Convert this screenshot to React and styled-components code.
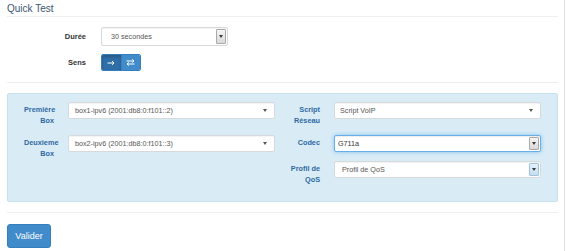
import React from 'react';
import styled, { createGlobalStyle, css } from 'styled-components';

const GlobalStyle = createGlobalStyle`
    html, body {
        margin: 0;
        padding: 0;
        background: #fff;
    }
    body {
        font-family: "Liberation Sans", Arial, sans-serif;
    }
`;

const Page = styled.div`
    width: 565px;
    height: 251px;
    box-sizing: border-box;
    border-right: 1px solid #dedede;
    padding: 0 7px;
    overflow: hidden;
`;

const Content = styled.div`
    width: 551px;
`;

const Title = styled.h3`
    margin: 0;
    padding: 3px 0 1px;
    font-size: 10px;
    line-height: 12px;
    font-weight: 500;
    color: #3b5470;
    border-bottom: 1px solid #eeeeee;
`;

const TopForm = styled.div`
    display: flex;
    flex-direction: column;
    gap: 8px;
    margin-top: 10px;
`;

const TopRow = styled.div`
    display: grid;
    grid-template-columns: 79px auto;
    column-gap: 15px;
    align-items: center;
    justify-content: start;
`;

const TopLabel = styled.label`
    text-align: right;
    font-size: 7.5px;
    font-weight: bold;
    color: #333;
`;

const Rule = styled.hr`
    margin: ${p => p.$top}px 0 ${p => p.$bottom}px;
    border: 0;
    border-top: 1px solid #eeeeee;
    height: 0;
`;

const Select = styled.div`
    display: flex;
    align-items: center;
    box-sizing: border-box;
    width: ${p => (p.$width ? `${p.$width}px` : '100%')};
    height: ${p => p.$height || 17}px;
    padding-left: ${p => p.$inset || 6}px;
    background: #fff;
    border: 1px solid ${p => (p.$focused ? '#66afe9' : '#d6dadd')};
    border-radius: 2px;
    box-shadow: ${p =>
        p.$focused
            ? 'inset 0 1px 1px rgba(0,0,0,.075), 0 0 4px rgba(102,175,233,.7)'
            : 'inset 0 1px 1px rgba(0,0,0,.05)'};
    font-size: 7.2px;
    color: ${p => (p.$dark ? '#333' : '#555')};
`;

const SelectText = styled.span`
    flex: 1;
    white-space: nowrap;
    overflow: hidden;
`;

const Caret = styled.span`
    width: 0;
    height: 0;
    margin-right: 7px;
    border-left: 2.5px solid transparent;
    border-right: 2.5px solid transparent;
    border-top: 3px solid #555;
`;

const NativeArrow = styled.span`
    align-self: stretch;
    display: flex;
    align-items: center;
    justify-content: center;
    width: 8px;
    margin: 1px 1px 1px 0;
    border: 1px solid #a9a9a9;
    border-radius: 1px;
    ${p =>
        p.$tone === 'blue'
            ? css`
                  background: linear-gradient(#e3f0fa, #c6def2);
                  border-color: #9fc2de;
              `
            : css`
                  background: linear-gradient(#f5f5f5, #d9d9d9);
              `}

    &::after {
        content: '';
        border-left: 2px solid transparent;
        border-right: 2px solid transparent;
        border-top: 3px solid #3a3a3a;
    }
`;

const Toggle = styled.div`
    display: flex;
    width: 40px;
    height: 17px;
    border-radius: 2px;
    overflow: hidden;
    border: 1px solid #357ebd;
    box-sizing: border-box;
`;

const ToggleButton = styled.button`
    flex: 1;
    display: flex;
    align-items: center;
    justify-content: center;
    padding: 0;
    border: 0;
    background: ${p => (p.$active ? '#2f6ea6' : '#428bca')};
    box-shadow: ${p => (p.$active ? 'inset 0 2px 3px rgba(0,0,0,.2)' : 'none')};
    & + & {
        border-left: 1px solid #3a7fbf;
    }
`;

const InfoPanel = styled.div`
    display: grid;
    grid-template-columns: 1fr 1fr;
    column-gap: 15px;
    box-sizing: border-box;
    padding: 8px 16px 16px;
    background: #d9ecf6;
    border: 1px solid #c7e2ef;
    border-radius: 2px;
`;

const Column = styled.div`
    display: flex;
    flex-direction: column;
    gap: 9px;
`;

const FieldRow = styled.div`
    display: grid;
    grid-template-columns: 30px 1fr;
    column-gap: 14px;
    align-items: start;
`;

const FieldLabel = styled.label`
    padding-top: 3px;
    text-align: right;
    font-size: 7.3px;
    line-height: 10.5px;
    font-weight: bold;
    color: #2f6aa3;
`;

const SubmitButton = styled.button`
    margin-top: 11px;
    width: 44px;
    height: 24px;
    padding: 0;
    font-family: inherit;
    font-size: 9px;
    color: #fff;
    background: #428bca;
    border: 1px solid #357ebd;
    border-radius: 3px;
`;

const ArrowRight = () => (
    <svg width="8" height="6" viewBox="0 0 8 6">
        <path d="M0.5 3H7M5 1.2L7 3L5 4.8" fill="none" stroke="#fff" strokeWidth="1" />
    </svg>
);

const ArrowBoth = () => (
    <svg width="9" height="7" viewBox="0 0 9 7">
        <path d="M0.5 2H8M6.2 0.4L8 2L6.2 3.6" fill="none" stroke="#fff" strokeWidth="1" />
        <path d="M8.5 5H1M2.8 3.4L1 5L2.8 6.6" fill="none" stroke="#fff" strokeWidth="1" />
    </svg>
);

const Field = ({ label, children }) => (
    <FieldRow>
        <FieldLabel>{label}</FieldLabel>
        {children}
    </FieldRow>
);

export default function App() {
    return (
        <Page>
            <GlobalStyle />
            <Content>
                <Title>Quick Test</Title>

                <TopForm>
                    <TopRow>
                        <TopLabel>Durée</TopLabel>
                        <Select $width={127} $height={19} $inset={9}>
                            <SelectText>30 secondes</SelectText>
                            <NativeArrow />
                        </Select>
                    </TopRow>
                    <TopRow>
                        <TopLabel>Sens</TopLabel>
                        <Toggle>
                            <ToggleButton $active>
                                <ArrowRight />
                            </ToggleButton>
                            <ToggleButton>
                                <ArrowBoth />
                            </ToggleButton>
                        </Toggle>
                    </TopRow>
                </TopForm>

                <Rule $top={11} $bottom={10} />

                <InfoPanel>
                    <Column>
                        <Field label="Première Box">
                            <Select>
                                <SelectText>box1-ipv6 (2001:db8:0:f101::2)</SelectText>
                                <Caret />
                            </Select>
                        </Field>
                        <Field label="Deuxieme Box">
                            <Select>
                                <SelectText>box2-ipv6 (2001:db8:0:f101::3)</SelectText>
                                <Caret />
                            </Select>
                        </Field>
                    </Column>
                    <Column>
                        <Field label="Script Réseau">
                            <Select $inset={5}>
                                <SelectText>Script VoIP</SelectText>
                                <Caret />
                            </Select>
                        </Field>
                        <Field label="Codec">
                            <Select $focused $dark $inset={3}>
                                <SelectText>G711a</SelectText>
                                <NativeArrow />
                            </Select>
                        </Field>
                        <Field label="Profil de QoS">
                            <Select $inset={7}>
                                <SelectText>Profil de QoS</SelectText>
                                <NativeArrow $tone="blue" />
                            </Select>
                        </Field>
                    </Column>
                </InfoPanel>

                <Rule $top={10} $bottom={0} />

                <SubmitButton>Valider</SubmitButton>
            </Content>
        </Page>
    );
}
